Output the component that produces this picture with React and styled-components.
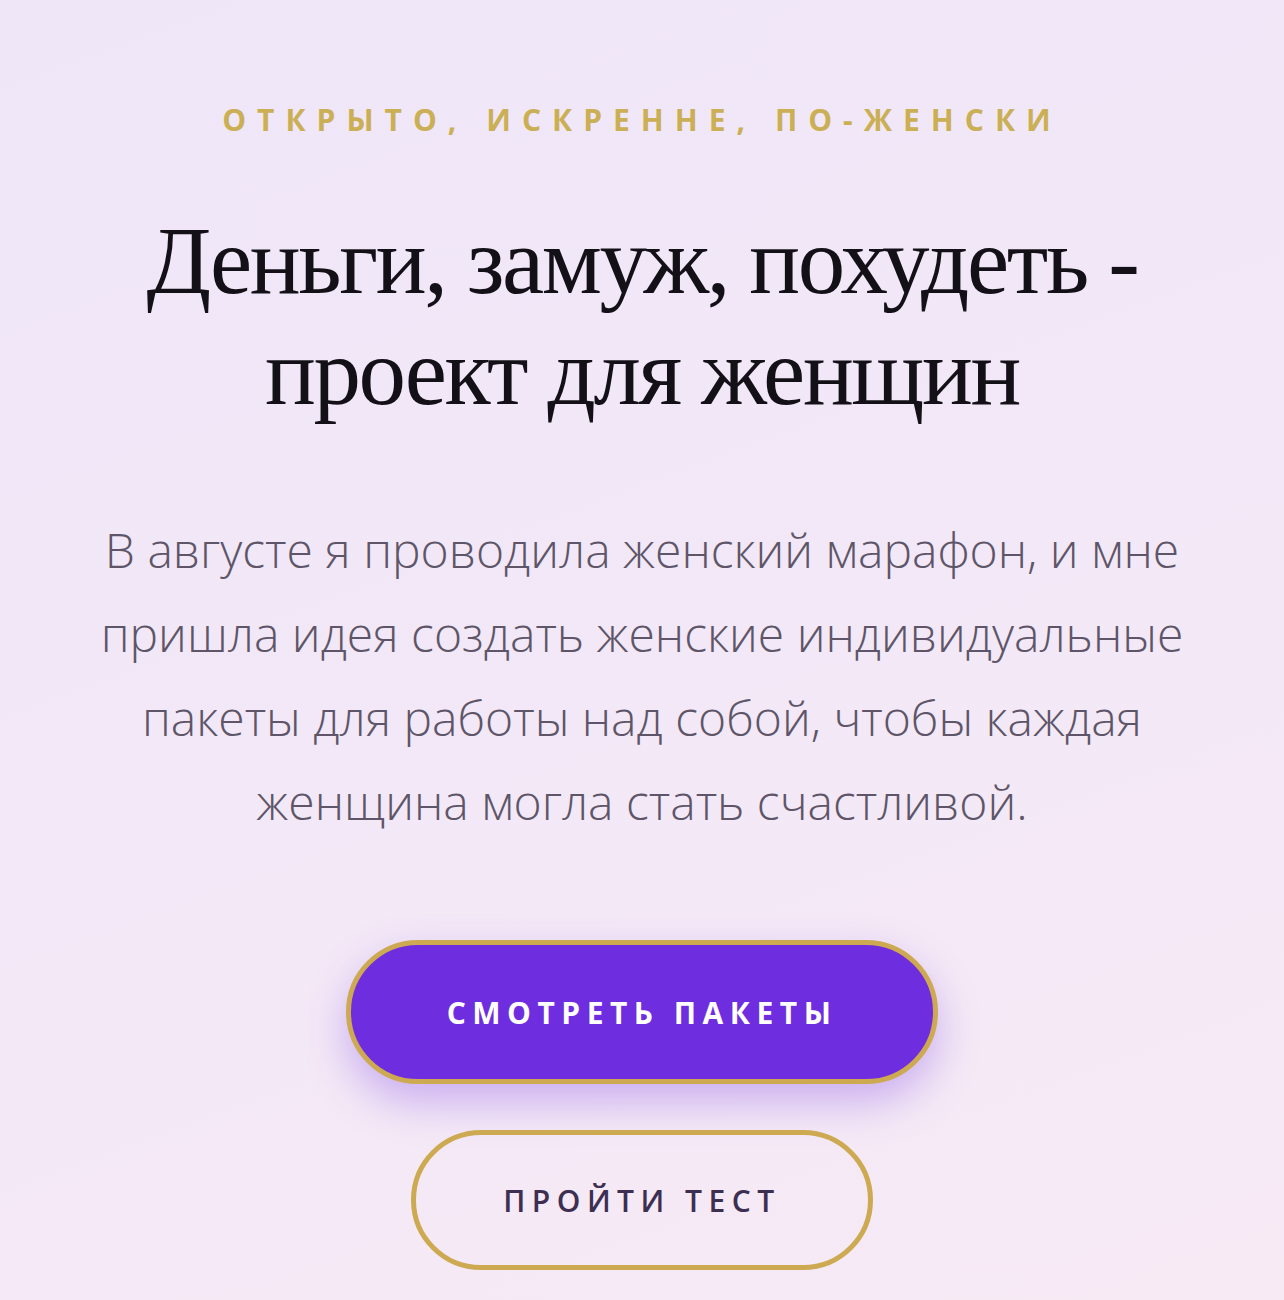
import React from "react";
import styled, { createGlobalStyle } from "styled-components";

const Global = createGlobalStyle`
  html, body { margin: 0; padding: 0; }
  body {
    background: linear-gradient(160deg, #efe6f8 0%, #f2e8f7 50%, #f7eaf5 100%);
    min-height: 1300px;
    font-family: "Open Sans", "Noto Sans", sans-serif;
  }
`;

const Hero = styled.section`
  min-height: 1300px;
  box-sizing: border-box;
  padding: 100px 40px 0;
  display: flex;
  flex-direction: column;
  align-items: center;
  text-align: center;
`;

const Eyebrow = styled.div`
  color: #cbaf55;
  font-family: "Open Sans", sans-serif;
  font-weight: 700;
  font-size: 30px;
  letter-spacing: 11px;
  line-height: 40px;
`;

const Title = styled.h1`
  margin: 66px 0 0;
  font-family: "Liberation Serif", "DejaVu Serif", serif;
  font-weight: 400;
  font-size: 95px;
  line-height: 111px;
  color: #141018;
  letter-spacing: -2.4px;
`;

const Lead = styled.p`
  margin: 80px 0 0;
  max-width: 1110px;
  font-family: "Open Sans", sans-serif;
  font-weight: 300;
  font-size: 48px;
  line-height: 84px;
  color: #5e5668;
`;

const Actions = styled.div`
  margin-top: 96px;
  display: flex;
  flex-direction: column;
  align-items: center;
  gap: 46px;
`;

const Button = styled.button`
  box-sizing: border-box;
  width: ${(p) => p.$w}px;
  height: ${(p) => p.$h}px;
  border-radius: 80px;
  border: 5px solid #cdaa52;
  background: ${(p) => (p.$primary ? "#6f2de0" : "transparent")};
  color: ${(p) => (p.$primary ? "#ffffff" : "#3c2f52")};
  box-shadow: ${(p) =>
    p.$primary ? "0 18px 40px rgba(125, 70, 230, 0.35)" : "none"};
  font-family: "Open Sans", sans-serif;
  font-weight: ${(p) => (p.$primary ? 700 : 600)};
  font-size: 30px;
  letter-spacing: 6.5px;
  padding: 0;
  cursor: pointer;
  display: flex;
  align-items: center;
  justify-content: center;
`;

export default function App() {
  return (
    <>
      <Global />
      <Hero>
        <Eyebrow>ОТКРЫТО, ИСКРЕННЕ, ПО-ЖЕНСКИ</Eyebrow>
        <Title>
          Деньги, замуж, похудеть -<br />
          проект для женщин
        </Title>
        <Lead>
          В августе я проводила женский марафон, и мне пришла идея создать
          женские индивидуальные пакеты для работы над собой, чтобы каждая
          женщина могла стать счастливой.
        </Lead>
        <Actions>
          <Button $primary $w={592} $h={144}>
            СМОТРЕТЬ ПАКЕТЫ
          </Button>
          <Button $w={462} $h={140}>
            ПРОЙТИ ТЕСТ
          </Button>
        </Actions>
      </Hero>
    </>
  );
}
